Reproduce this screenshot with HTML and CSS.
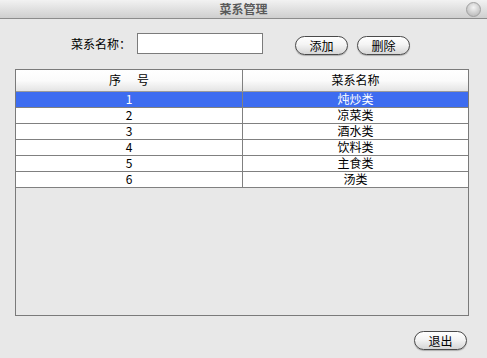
FILE: index.html
```html
<!DOCTYPE html>
<html>
<head>
<meta charset="utf-8">
<link rel="stylesheet" href="styles.css">
</head>
<body>
<div class="window">
  <div class="titlebar">
    <span class="title">菜系管理</span>
    <span class="close"></span>
  </div>
  <div class="form">
    <label class="label">菜系名称：</label>
    <input class="field" type="text">
    <button class="btn add">添加</button>
    <button class="btn del">删除</button>
  </div>
  <div class="grid">
    <div class="row head">
      <div class="cell c1">序&nbsp;&nbsp;&nbsp;&nbsp;&nbsp;&nbsp;号</div>
      <div class="cell c2">菜系名称</div>
    </div>
    <div class="row sel"><div class="cell c1">1</div><div class="cell c2">炖炒类</div></div>
    <div class="row"><div class="cell c1">2</div><div class="cell c2">凉菜类</div></div>
    <div class="row"><div class="cell c1">3</div><div class="cell c2">酒水类</div></div>
    <div class="row"><div class="cell c1">4</div><div class="cell c2">饮料类</div></div>
    <div class="row"><div class="cell c1">5</div><div class="cell c2">主食类</div></div>
    <div class="row"><div class="cell c1">6</div><div class="cell c2">汤类</div></div>
  </div>
  <div class="footer">
    <button class="btn exit">退出</button>
  </div>
</div>
</body>
</html>
```
FILE: styles.css
```css
* { box-sizing: border-box; }
html, body { margin: 0; padding: 0; }
body {
  width: 487px;
  height: 358px;
  background: #e8e8e8;
  font-family: "Noto Sans CJK SC", "Liberation Sans", sans-serif;
  font-size: 12px;
  color: #000;
  overflow: hidden;
}
.window { display: flex; flex-direction: column; height: 358px; }
.titlebar {
  position: relative;
  height: 19px;
  background: linear-gradient(#f2f2f2, #cfcfcf);
  border-bottom: 1px solid #8c8c8c;
  display: flex;
  align-items: center;
  justify-content: center;
}
.title {
  font-weight: bold;
  color: #5a5a5a;
  font-size: 12px;
  line-height: 16px;
}
.close {
  position: absolute;
  right: 6px;
  top: 2px;
  width: 15px;
  height: 15px;
  border-radius: 50%;
  border: 1px solid #a0a0a0;
  background: radial-gradient(circle at 50% 35%, #f4f4f4, #c4c4c4 70%, #b0b0b0);
}
.form {
  display: flex;
  align-items: center;
  margin-top: 14px;
  height: 21px;
  padding-left: 71px;
}
.label { font-size: 12px; line-height: 21px; width: 66px; }
.field {
  width: 126px;
  height: 21px;
  border: 1px solid #7b7b7b;
  background: #fff;
  margin: 0;
  padding: 0;
}
.btn {
  font-family: "Noto Sans CJK SC", sans-serif;
  font-size: 12px;
  line-height: 15px;
  width: 53px;
  height: 19px;
  padding: 0;
  margin: 0;
  border: 1px solid #4a4a4a;
  border-radius: 10px;
  background: linear-gradient(#ffffff 0%, #f4f4f4 45%, #d6d6d6 100%);
  box-shadow: 0 1px 1px rgba(0,0,0,0.25);
  color: #000;
}
.add { margin-left: 32px; margin-top: 4px; }
.del { margin-left: 9px; margin-top: 4px; }
.grid {
  margin: 15px 0 0 15px;
  width: 454px;
  height: 247px;
  border: 1px solid #7a7a7a;
  background: #e8e8e8;
}
.row {
  display: flex;
  height: 16px;
  border-bottom: 1px solid #808080;
  background: #fff;
}
.row.head {
  height: 22px;
  background: linear-gradient(#ffffff 0%, #fbfbfb 50%, #e4e4e4 100%);
  border-bottom: 1px solid #9a9a9a;
}
.cell {
  text-align: center;
  line-height: 14px;
  font-size: 12px;
  white-space: nowrap;
}
.head .cell { line-height: 20px; }
.c1 { width: 227px; border-right: 1px solid #808080; }
.c2 { width: 225px; }
.row.sel { background: #3d6cf0; color: #fff; }
.footer {
  display: flex;
  justify-content: flex-end;
  padding-right: 20px;
  margin-top: 15px;
}
```
